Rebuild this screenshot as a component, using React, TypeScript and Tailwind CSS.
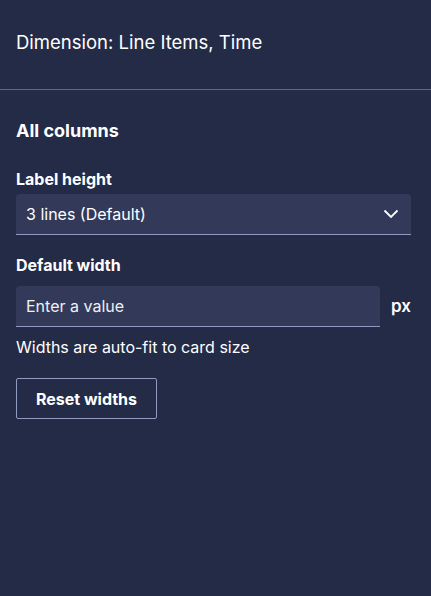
import React from 'react';

const App: React.FC = () => {
  return (
    <div className="w-[431px] h-[596px] bg-[#232b47] text-white font-['Inter',sans-serif] overflow-hidden">
      <div className="h-[89px] flex items-center pl-4 pr-5 pb-[4px]">
        <h2 className="text-[18.5px]">Dimension: Line Items, Time</h2>
      </div>
      <div className="h-px bg-[#5c6690]" />

      <div className="pl-4 pr-5 pt-[30px]">
        <h3 className="text-[18px] font-bold leading-[22px]">All columns</h3>

        <label className="block mt-[27px] text-[16px] font-bold leading-[20px]">Label height</label>
        <button className="mt-[5px] w-full h-[41px] flex items-center justify-between pl-[10px] pr-[12px] bg-[#333a59] rounded-t-[4px] border-b border-[#8f9bc3] text-[16px]">
          <span>3 lines (Default)</span>
          <svg width="16" height="10" viewBox="0 0 16 10" fill="none" stroke="white" strokeWidth="1.8">
            <path d="M1.5 1.5 L8 8 L14.5 1.5" />
          </svg>
        </button>

        <label className="block mt-[20px] text-[16px] font-bold leading-[20px]">Default width</label>
        <div className="mt-[11px] flex items-center gap-[11px]">
          <input
            className="flex-1 h-[41px] px-[10px] bg-[#333a59] rounded-t-[4px] border-b border-[#8f9bc3] text-[16px] text-white placeholder:text-[#eef0f5] outline-none"
            placeholder="Enter a value"
          />
          <span className="text-[17px] font-semibold">px</span>
        </div>
        <p className="mt-[10px] text-[16px] leading-[20px]">Widths are auto-fit to card size</p>

        <button className="mt-[21px] h-[41px] w-[141px] border border-[#8f9bc3] rounded-[2px] text-[16px] font-bold">
          Reset widths
        </button>
      </div>
    </div>
  );
};

export default App;
